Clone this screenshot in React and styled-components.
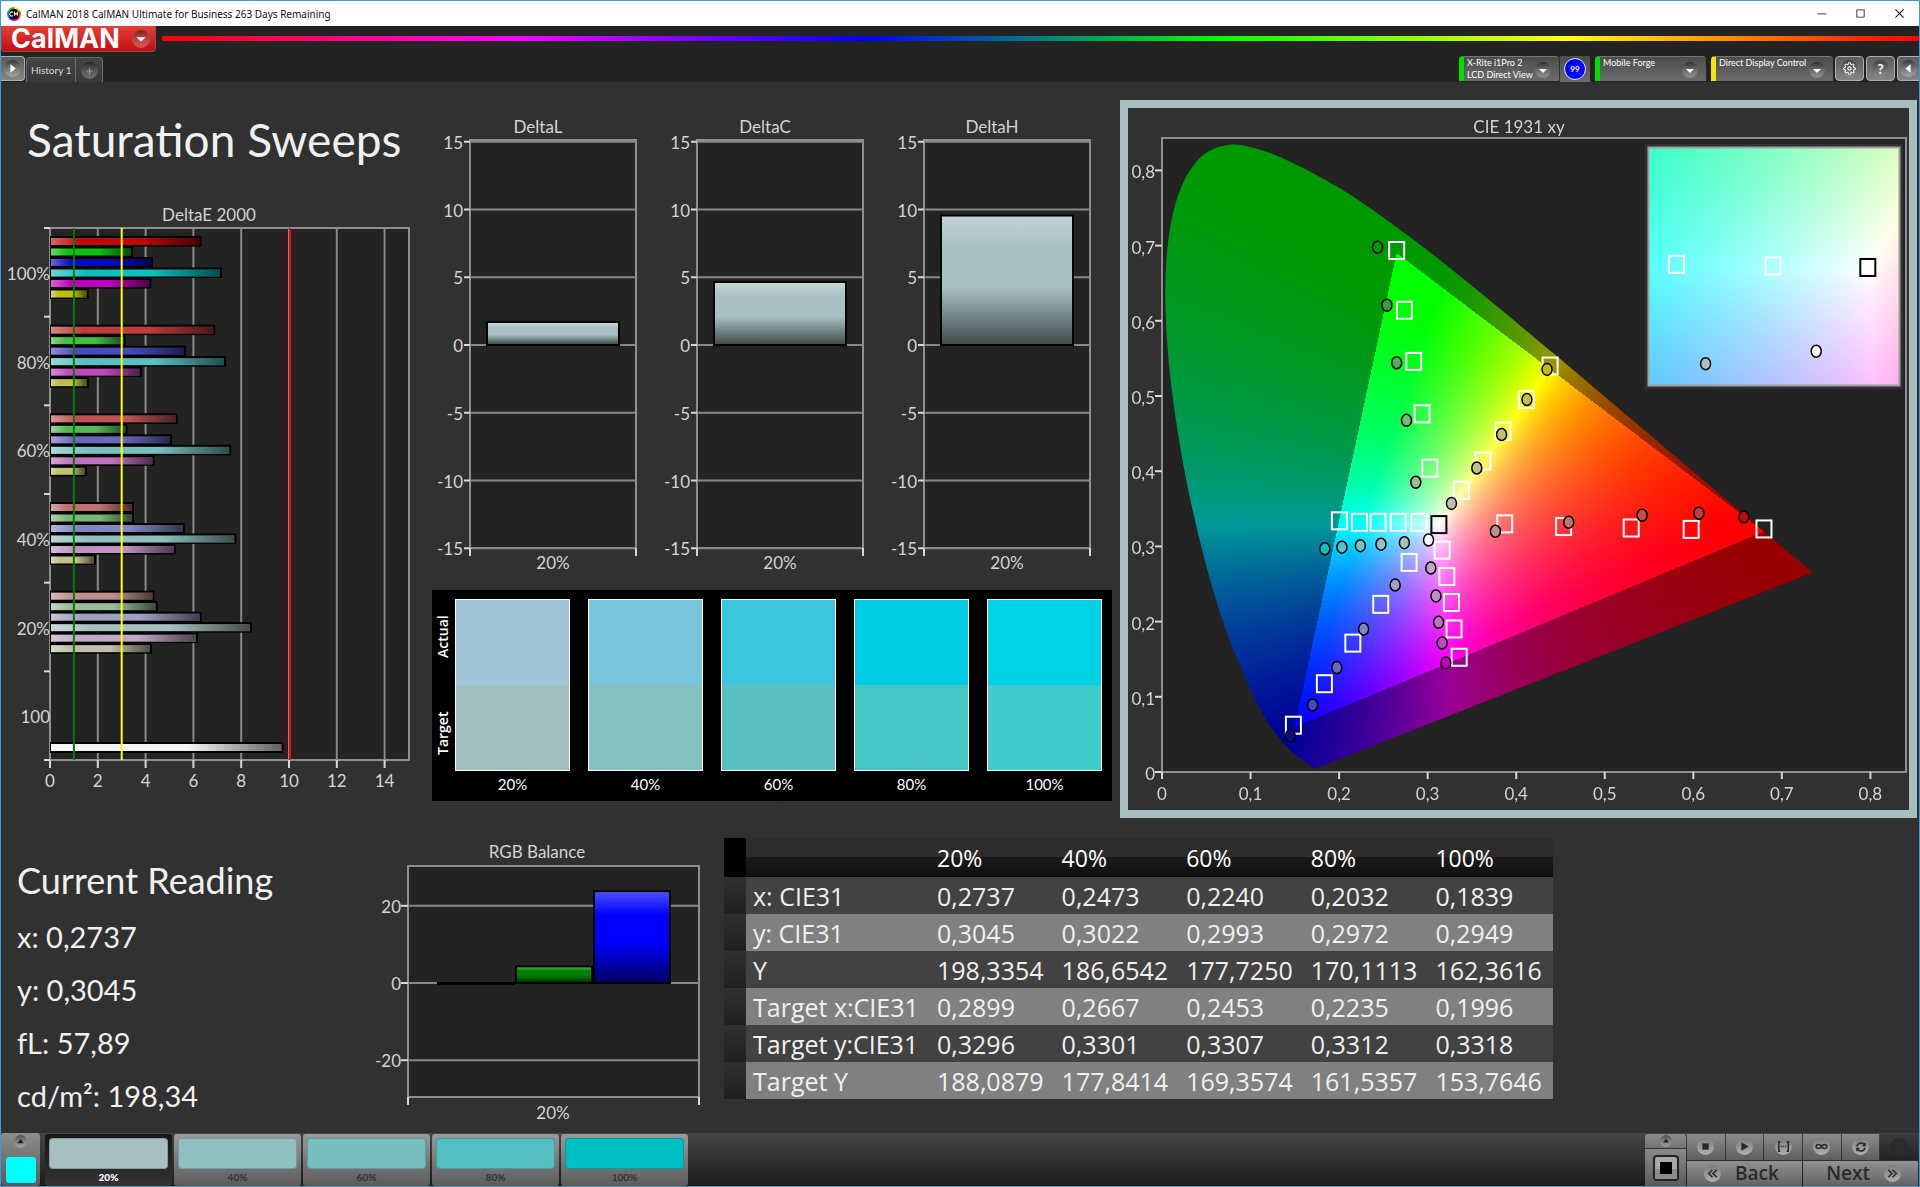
import React, { useEffect, useRef } from "react";
import styled, { createGlobalStyle } from "styled-components";
import { VscChromeMinimize, VscChromeMaximize, VscChromeClose } from "react-icons/vsc";
import { FiSettings } from "react-icons/fi";
import { FaSyncAlt } from "react-icons/fa";

const LEVELS = ["20%", "40%", "60%", "80%", "100%"];

const deltaE = [
  {
    label: "100%",
    bars: [
      ["#c00808", 6.3],
      ["#10c010", 3.43],
      ["#0a0ac0", 4.27],
      ["#0cc0c0", 7.15],
      ["#c000c0", 4.2],
      ["#c0c008", 1.58],
    ],
  },
  {
    label: "80%",
    bars: [
      ["#c03c3c", 6.87],
      ["#40c040", 3.12],
      ["#4848c0", 5.65],
      ["#58c0c0", 7.32],
      ["#c048c0", 3.8],
      ["#c0c048", 1.58],
    ],
  },
  {
    label: "60%",
    bars: [
      ["#c05454", 5.3],
      ["#58b858", 3.2],
      ["#6868c0", 5.06],
      ["#78c0c0", 7.54],
      ["#c070c0", 4.33],
      ["#c0c070", 1.5],
    ],
  },
  {
    label: "40%",
    bars: [
      ["#c07070", 3.47],
      ["#78b878", 3.47],
      ["#8484c4", 5.6],
      ["#90c0c0", 7.75],
      ["#c090c4", 5.23],
      ["#c0c088", 1.88],
    ],
  },
  {
    label: "20%",
    bars: [
      ["#c09090", 4.33],
      ["#98bc98", 4.46],
      ["#a0a0c4", 6.3],
      ["#a8c0c0", 8.4],
      ["#c0a8c4", 6.15],
      ["#c0c0a8", 4.22],
    ],
  },
];

const swatches = [
  { actual: "#a2c4d8", target: "#a2bfc0" },
  { actual: "#78c4da", target: "#84c0c0" },
  { actual: "#3cc6de", target: "#5cc0c2" },
  { actual: "#00cce4", target: "#48c6c6" },
  { actual: "#00d2e6", target: "#40cccb" },
];

const patterns = ["#a8bfc0", "#90bfc0", "#78bfc0", "#54bfc0", "#00bfc2"];

const tableRows = [
  ["x: CIE31", "0,2737", "0,2473", "0,2240", "0,2032", "0,1839"],
  ["y: CIE31", "0,3045", "0,3022", "0,2993", "0,2972", "0,2949"],
  ["Y", "198,3354", "186,6542", "177,7250", "170,1113", "162,3616"],
  ["Target x:CIE31", "0,2899", "0,2667", "0,2453", "0,2235", "0,1996"],
  ["Target y:CIE31", "0,3296", "0,3301", "0,3307", "0,3312", "0,3318"],
  ["Target Y", "188,0879", "177,8414", "169,3574", "161,5357", "153,7646"],
];

const locus = [
  [0.1741, 0.005], [0.1714, 0.0051], [0.1644, 0.0109], [0.1566, 0.0177],
  [0.144, 0.0297], [0.1241, 0.0578], [0.1096, 0.0868], [0.0913, 0.1327],
  [0.0687, 0.2007], [0.0454, 0.295], [0.0235, 0.4127], [0.0082, 0.5384],
  [0.0039, 0.6548], [0.0139, 0.7502], [0.0389, 0.812], [0.0743, 0.8338],
  [0.1142, 0.8262], [0.1547, 0.8059], [0.1929, 0.7816], [0.2296, 0.7543],
  [0.3016, 0.6923], [0.3731, 0.6245], [0.4441, 0.5547], [0.5125, 0.4866],
  [0.5752, 0.4242], [0.627, 0.3725], [0.6658, 0.334], [0.6915, 0.3083],
  [0.719, 0.2809], [0.7347, 0.2653],
];

const gamut = [[0.68, 0.32], [0.265, 0.69], [0.15, 0.06]];

const targets = [
  [0.265, 0.6935], [0.2738, 0.614], [0.2843, 0.546], [0.2937, 0.4763], [0.3024, 0.404],
  [0.4383, 0.5398], [0.4115, 0.4952], [0.3852, 0.4532], [0.3625, 0.4136], [0.338, 0.3747],
  [0.387, 0.33], [0.4535, 0.3264], [0.5299, 0.3245], [0.5976, 0.3226], [0.6798, 0.3232],
  [0.2901, 0.332], [0.2667, 0.332], [0.244, 0.332], [0.2231, 0.332], [0.2003, 0.334],
  [0.3164, 0.295], [0.3216, 0.2599], [0.3269, 0.2254], [0.3298, 0.1902], [0.3356, 0.1526],
  [0.2791, 0.2787], [0.247, 0.2229], [0.2155, 0.1714], [0.1834, 0.1174], [0.1484, 0.0622],
];

const actuals = [
  [0.2435, 0.6979, "#009c00"], [0.254, 0.6207, "#30a040"], [0.265, 0.5442, "#50b058"],
  [0.2761, 0.4676, "#78b878"], [0.2866, 0.3854, "#98bc98"],
  [0.4348, 0.5354, "#c0c008"], [0.4121, 0.4952, "#c0c048"], [0.3835, 0.4488, "#c0c070"],
  [0.3555, 0.4042, "#c0c088"], [0.3269, 0.3572, "#c0c0a8"],
  [0.6571, 0.339, "#c00808"], [0.6063, 0.344, "#c03c3c"], [0.5422, 0.3415, "#c05454"],
  [0.4593, 0.3321, "#c07070"], [0.3765, 0.3202, "#c09090"],
  [0.1839, 0.297, "#0cc0c0"], [0.2032, 0.299, "#58c0c0"], [0.224, 0.301, "#78c0c0"],
  [0.2473, 0.303, "#90c0c0"], [0.2737, 0.305, "#a8c0c0"],
  [0.3036, 0.2712, "#c0a8c4"], [0.3094, 0.2342, "#c090c4"], [0.3123, 0.199, "#c070c0"],
  [0.3164, 0.1714, "#c048c0"], [0.3205, 0.1451, "#c000c0"],
  [0.2633, 0.2486, "#a0a0c4"], [0.2277, 0.1902, "#8484c4"], [0.1974, 0.1388, "#6868c0"],
  [0.17, 0.0892, "#4848c0"], [0.1449, 0.0478, "#0a0a90"],
  [0.301, 0.3085, "#ffffff"],
];

/* ---------- charts ---------- */

function DeltaEChart() {
  const left = 49;
  const right = 408;
  const top = 28;
  const bottom = 560;
  const x = (v) => left + v * 23.9;
  const slot = (bottom - top) / 6;
  const row = (group, i) => top + group * slot + 8 + i * 10.5;

  return (
    <Chart viewBox="0 0 430 600" role="img" aria-label="DeltaE 2000">
      <defs>
        <linearGradient id="barShade">
          <stop offset="0" stopColor="#fff" stopOpacity="0.38" />
          <stop offset="0.2" stopColor="#fff" stopOpacity="0" />
          <stop offset="0.6" stopColor="#000" stopOpacity="0" />
          <stop offset="1" stopColor="#000" stopOpacity="0.6" />
        </linearGradient>
      </defs>
      <ChartText x={208} y={21} textAnchor="middle">DeltaE 2000</ChartText>
      <Plot x={left} y={top} width={right - left} height={bottom - top} />
      {[2, 4, 6, 8, 10, 12, 14].map((v) => (
        <GridLine key={v} x1={x(v)} x2={x(v)} y1={top} y2={bottom} />
      ))}
      {[0, 2, 4, 6, 8, 10, 12, 14].map((v) => (
        <g key={v}>
          <Tick x1={x(v)} x2={x(v)} y1={bottom} y2={bottom + 8} />
          <ChartText x={x(v)} y={bottom + 27} textAnchor="middle">{v}</ChartText>
        </g>
      ))}
      {[0, 1, 2, 3, 4, 5, 6].map((i) => (
        <Tick key={i} x1={left - 6} x2={left} y1={top + i * slot} y2={top + i * slot} />
      ))}
      {deltaE.map((group, g) => (
        <g key={group.label}>
          <ChartText x={left} y={top + g * slot + 52} textAnchor="end">{group.label}</ChartText>
          {group.bars.map(([color, value], i) => (
            <g key={color}>
              <rect x={left} y={row(g, i)} width={x(value) - left + 1} height={10.5} fill="#000" />
              <rect x={left + 1} y={row(g, i) + 2} width={x(value) - left - 2} height={7} fill={color} />
              <rect x={left + 1} y={row(g, i) + 2} width={x(value) - left - 2} height={7} fill="url(#barShade)" />
            </g>
          ))}
        </g>
      ))}
      <ChartText x={left} y={top + 5 * slot + 52} textAnchor="end">100</ChartText>
      <rect x={left} y={542} width={x(9.72) - left + 1} height={11} fill="#000" />
      <rect x={left + 1} y={544} width={x(9.72) - left - 2} height={7} fill="#f4f4f4" />
      <rect x={left + 1} y={544} width={x(9.72) - left - 2} height={7} fill="url(#barShade)" />
      <line x1={x(1)} x2={x(1)} y1={top} y2={bottom} stroke="#0a780a" strokeWidth="2" />
      <line x1={x(3)} x2={x(3)} y1={top} y2={bottom} stroke="#ffff00" strokeWidth="2" />
      <line x1={x(10) + 1} x2={x(10) + 1} y1={top} y2={bottom} stroke="#ff0000" strokeWidth="2" />
    </Chart>
  );
}

function DeltaChart({ title, value }) {
  const left = 39;
  const right = 205;
  const top = 30;
  const bottom = 438;
  const y = (v) => 235 - v * 13.55;
  const height = y(0) - y(value);

  return (
    <Chart viewBox="0 0 227 472" role="img" aria-label={title}>
      <defs>
        <linearGradient id="columnShade" x2="0" y2="1">
          <stop offset="0" stopColor="#fff" stopOpacity="0.3" />
          <stop offset="0.25" stopColor="#fff" stopOpacity="0" />
          <stop offset="0.55" stopColor="#000" stopOpacity="0" />
          <stop offset="1" stopColor="#000" stopOpacity="0.6" />
        </linearGradient>
      </defs>
      <ChartText x={107} y={23} textAnchor="middle">{title}</ChartText>
      <Plot x={left} y={top} width={right - left} height={bottom - top} />
      {[15, 10, 5, 0, -5, -10, -15].map((v) => (
        <g key={v}>
          <GridLine x1={left} x2={right} y1={y(v)} y2={y(v)} />
          <Tick x1={left - 6} x2={left} y1={y(v)} y2={y(v)} />
          <ChartText x={left - 7} y={y(v) + 7} textAnchor="end">{v}</ChartText>
        </g>
      ))}
      <Tick x1={left} x2={left} y1={bottom} y2={bottom + 8} />
      <Tick x1={right} x2={right} y1={bottom} y2={bottom + 8} />
      <rect x={56} y={y(value)} width={132} height={height} fill="#a8c0c2" stroke="#000" strokeWidth="2" />
      <rect x={57} y={y(value) + 1} width={130} height={height - 2} fill="url(#columnShade)" />
      <ChartText x={122} y={459} textAnchor="middle">20%</ChartText>
    </Chart>
  );
}

function RgbBalance() {
  const left = 37;
  const right = 328;
  const top = 28;
  const bottom = 259;
  const y = (v) => 145 - v * 3.86;

  return (
    <Chart viewBox="0 0 352 290" role="img" aria-label="RGB Balance">
      <ChartText x={166} y={20} textAnchor="middle">RGB Balance</ChartText>
      <Plot x={left} y={top} width={right - left} height={bottom - top} />
      {[20, 0, -20].map((v) => (
        <g key={v}>
          <GridLine x1={left} x2={right} y1={y(v)} y2={y(v)} />
          <Tick x1={left - 7} x2={left} y1={y(v)} y2={y(v)} />
          <ChartText x={left - 7} y={y(v) + 7} textAnchor="end">{v}</ChartText>
        </g>
      ))}
      <Tick x1={left} x2={left} y1={bottom} y2={bottom + 8} />
      <Tick x1={right} x2={right} y1={bottom} y2={bottom + 8} />
      <rect x={66} y={144} width={78} height={3} fill="#000" />
      {[
        [145, 4.3, "#008000"],
        [223, 23.8, "#0000ff"],
      ].map(([x, value, color]) => (
        <g key={color}>
          <rect x={x} y={y(value)} width={76} height={y(0) - y(value)} fill={color} stroke="#000" strokeWidth="2" />
          <rect x={x + 1} y={y(value) + 1} width={74} height={y(0) - y(value) - 2} fill="url(#columnShade)" />
        </g>
      ))}
      <ChartText x={182} y={281} textAnchor="middle">20%</ChartText>
    </Chart>
  );
}

/* CIE diagram: the colours are computed per pixel, axes and markers go on top */

const CIE_W = 781;
const CIE_H = 702;
const cieX = (x) => 34 + x * 885.5;
const cieY = (y) => 664 - y * 752;
const insetX = (x) => 521 + (x - 0.2601) * 4160;
const insetY = (y) => 40 + (0.3594 - y) * 3930;

function colorAt(x, y) {
  const X = x / y;
  const Z = (1 - x - y) / y;
  const rgb = [
    3.2406 * X - 1.5372 - 0.4986 * Z,
    -0.9689 * X + 1.8758 + 0.0415 * Z,
    0.0557 * X - 0.204 + 1.057 * Z,
  ].map((c) => Math.max(0, c));
  const max = Math.max(...rgb);
  return rgb.map((c) => (255 * c) / max);
}

function insideGamut(x, y) {
  return gamut.every(([ax, ay], i) => {
    const [bx, by] = gamut[(i + 1) % 3];
    return (bx - ax) * (y - ay) - (by - ay) * (x - ax) >= 0;
  });
}

function traceLocus(ctx) {
  const pts = locus.map(([x, y]) => [cieX(x), cieY(y)]);
  ctx.beginPath();
  ctx.moveTo(...pts[0]);
  for (let i = 0; i < pts.length - 1; i++) {
    const p0 = pts[Math.max(0, i - 1)];
    const p1 = pts[i];
    const p2 = pts[i + 1];
    const p3 = pts[Math.min(pts.length - 1, i + 2)];
    ctx.bezierCurveTo(
      p1[0] + (p2[0] - p0[0]) / 6,
      p1[1] + (p2[1] - p0[1]) / 6,
      p2[0] - (p3[0] - p1[0]) / 6,
      p2[1] - (p3[1] - p1[1]) / 6,
      p2[0],
      p2[1]
    );
  }
  ctx.closePath();
}

function drawChromaticity(canvas) {
  const ctx = canvas.getContext("2d");
  const image = ctx.createImageData(CIE_W, CIE_H);
  for (let py = 0; py < CIE_H; py++) {
    for (let px = 0; px < CIE_W; px++) {
      const x = (px + 0.5 - 34) / 885.5;
      const y = (664 - py - 0.5) / 752;
      if (x < 0 || y <= 0 || x + y > 1.05) continue;
      const k = insideGamut(x, y) ? 1 : 0.6;
      const [r, g, b] = colorAt(x, y);
      image.data.set([r * k, g * k, b * k, 255], (py * CIE_W + px) * 4);
    }
  }
  ctx.putImageData(image, 0, 0);
  ctx.globalCompositeOperation = "destination-in";
  traceLocus(ctx);
  ctx.fill();
  ctx.globalCompositeOperation = "source-over";

  ctx.fillStyle = "#313131";
  ctx.fillRect(517, 36, 258, 245);
  const inset = ctx.createImageData(250, 237);
  for (let py = 0; py < 237; py++) {
    for (let px = 0; px < 250; px++) {
      const rgb = colorAt(0.2601 + px / 4160, 0.3594 - py / 3930);
      inset.data.set([...rgb, 255], (py * 250 + px) * 4);
    }
  }
  ctx.putImageData(inset, 521, 40);
}

function CieChart() {
  const canvasRef = useRef(null);

  useEffect(() => drawChromaticity(canvasRef.current), []);

  return (
    <CieStack>
      <svg viewBox={`0 0 ${CIE_W} ${CIE_H}`} aria-hidden="true">
        <Plot x={34} y={30} width={744} height={634} />
      </svg>
      <canvas ref={canvasRef} width={CIE_W} height={CIE_H} />
      <svg viewBox={`0 0 ${CIE_W} ${CIE_H}`} role="img" aria-label="CIE 1931 xy">
        <ChartText x={391} y={25} textAnchor="middle">CIE 1931 xy</ChartText>
        {[0, 1, 2, 3, 4, 5, 6, 7, 8].map((v) => {
          const label = v === 0 ? "0" : `0,${v}`;
          return (
            <g key={v}>
              <Tick x1={cieX(v / 10)} x2={cieX(v / 10)} y1={664} y2={671} />
              <ChartText x={cieX(v / 10)} y={692} textAnchor="middle">{label}</ChartText>
              <Tick x1={27} x2={34} y1={cieY(v / 10)} y2={cieY(v / 10)} />
              <ChartText x={27} y={cieY(v / 10) + 8} textAnchor="end">{label}</ChartText>
            </g>
          );
        })}
        {targets.map(([x, y], i) => (
          <Target key={i} x={cieX(x) - 7.5} y={cieY(y) - 8.5} width={15} height={17} />
        ))}
        <Target $white x={cieX(0.3127) - 7.5} y={cieY(0.329) - 8.5} width={15} height={17} />
        {actuals.map(([x, y, color], i) => (
          <Actual key={i} cx={cieX(x)} cy={cieY(y)} rx={5} ry={6} fill={color} />
        ))}
        <rect x={520.5} y={39.5} width={251} height={238} fill="none" stroke="#a0a0a0" strokeWidth="2" />
        <Target x={insetX(0.2667) - 7.5} y={insetY(0.3298) - 8.5} width={15} height={17} />
        <Target x={insetX(0.2899) - 7.5} y={insetY(0.3294) - 8.5} width={15} height={17} />
        <Target $white x={insetX(0.3127) - 7.5} y={insetY(0.329) - 8.5} width={15} height={17} />
        <Actual cx={insetX(0.2737)} cy={insetY(0.3045)} rx={5} ry={6} fill="#a8c0c0" />
        <Actual cx={insetX(0.3003)} cy={insetY(0.3077)} rx={5} ry={6} fill="#ffffff" />
      </svg>
    </CieStack>
  );
}

/* ---------- small drawings ---------- */

const RoundIcon = ({ size = 16, children }) => (
  <svg width={size} height={size} viewBox="0 0 16 16" aria-hidden="true">
    <defs>
      <linearGradient id="dimple" x2="0" y2="1">
        <stop offset="0" stopColor="#000" stopOpacity="0.45" />
        <stop offset="1" stopColor="#fff" stopOpacity="0.25" />
      </linearGradient>
    </defs>
    <circle cx="8" cy="8" r="8" fill="url(#dimple)" />
    {children}
  </svg>
);

const LightIcon = ({ children }) => (
  <svg width="17" height="17" viewBox="0 0 16 16" aria-hidden="true">
    <defs>
      <linearGradient id="lightDimple" x2="0" y2="1">
        <stop offset="0" stopColor="#7c7c7c" />
        <stop offset="1" stopColor="#b0b0b0" />
      </linearGradient>
    </defs>
    <circle cx="8" cy="8" r="8" fill="url(#lightDimple)" />
    {children}
  </svg>
);

const AppIcon = () => (
  <svg width="14" height="14" viewBox="0 0 14 14" aria-hidden="true">
    <path d="M7 7 7 0A7 7 0 0 1 13 3.5z" fill="#ffe600" />
    <path d="M7 7 13 3.5A7 7 0 0 1 13 10.5z" fill="#ff5a00" />
    <path d="M7 7 13 10.5A7 7 0 0 1 7 14z" fill="#f0009a" />
    <path d="M7 7 7 14A7 7 0 0 1 1 10.5z" fill="#6a28ff" />
    <path d="M7 7 1 10.5A7 7 0 0 1 1 3.5z" fill="#00a0ff" />
    <path d="M7 7 1 3.5A7 7 0 0 1 7 0z" fill="#20d020" />
    <circle cx="7" cy="7" r="5.3" fill="#000" />
    <path d="M6 5.4A2 2 0 1 0 6 8.6M7.4 8.8V5.4L9 7.6 10.6 5.4V8.8" stroke="#fff" strokeWidth="1.1" fill="none" />
  </svg>
);

/* ---------- page ---------- */

export default function App() {
  return (
    <Window>
      <GlobalStyle />
      <TitleBar>
        <AppIcon />
        <TitleText>CalMAN 2018 CalMAN Ultimate for Business 263 Days Remaining</TitleText>
        <WindowButton aria-label="Minimize"><VscChromeMinimize /></WindowButton>
        <WindowButton aria-label="Maximize"><VscChromeMaximize /></WindowButton>
        <WindowButton aria-label="Close"><VscChromeClose /></WindowButton>
      </TitleBar>

      <Header>
        <Brand>
          <LogoButton>
            CalMAN
            <RoundIcon size={18}><path d="M4 6.5h8L8 10.5z" fill="#fff" /></RoundIcon>
          </LogoButton>
          <Spectrum />
        </Brand>
        <TabBar>
          <SquareButton $edge="left" aria-label="Show workflow">
            <RoundIcon size={17}><path d="M6 4v8L11 8z" fill="#fff" /></RoundIcon>
          </SquareButton>
          <Tabs>
            <Tab>History 1</Tab>
            <Tab aria-label="Add history">
              <RoundIcon size={17}><path d="M8 5.5v6M5 8.5h6" stroke="#999" /></RoundIcon>
            </Tab>
          </Tabs>
          <Devices>
            <DeviceGroup>
              <Device $status="#00e000" $width={100}>
                <span>X-Rite i1Pro 2<br />LCD Direct View</span>
                <RoundIcon><path d="M4 7h8L8 11z" fill="#fff" /></RoundIcon>
              </Device>
              <MeterBadge><span>99</span></MeterBadge>
            </DeviceGroup>
            <Device $status="#00e000" $width={111}>
              <span>Mobile Forge</span>
              <RoundIcon><path d="M4 7h8L8 11z" fill="#fff" /></RoundIcon>
            </Device>
            <Device $status="#f0e800" $width={122}>
              <span>Direct Display Control</span>
              <RoundIcon><path d="M4 7h8L8 11z" fill="#fff" /></RoundIcon>
            </Device>
            <ToolButtons>
              <SquareButton aria-label="Settings"><Dimple><FiSettings size={13} /></Dimple></SquareButton>
              <SquareButton aria-label="Help"><Dimple>?</Dimple></SquareButton>
              <SquareButton $edge="right" aria-label="Collapse">
                <RoundIcon size={17}><path d="M10 4v8L5 8z" fill="#fff" /></RoundIcon>
              </SquareButton>
            </ToolButtons>
          </Devices>
        </TabBar>
      </Header>

      <Main>
        <TopRow>
          <section>
            <PageTitle>Saturation Sweeps</PageTitle>
            <DeltaEChart />
          </section>
          <Middle>
            <DeltaRow>
              <DeltaChart title="DeltaL" value={1.7} />
              <DeltaChart title="DeltaC" value={4.65} />
              <DeltaChart title="DeltaH" value={9.55} />
            </DeltaRow>
            <SwatchPanel>
              <SwatchSides>
                <span>Actual</span>
                <span>Target</span>
              </SwatchSides>
              {swatches.map(({ actual, target }, i) => (
                <Swatch key={LEVELS[i]}>
                  <SwatchColors>
                    <Fill $color={actual} />
                    <Fill $color={target} />
                  </SwatchColors>
                  <figcaption>{LEVELS[i]}</figcaption>
                </Swatch>
              ))}
            </SwatchPanel>
          </Middle>
          <CiePanel>
            <CieChart />
          </CiePanel>
        </TopRow>

        <BottomRow>
          <Reading>
            <h2>Current Reading</h2>
            <p>x: 0,2737</p>
            <p>y: 0,3045</p>
            <p>fL: 57,89</p>
            <p>cd/m²: 198,34</p>
          </Reading>
          <RgbBalance />
          <DataTable>
            <thead>
              <tr>
                <Stub />
                <th />
                {LEVELS.map((level) => (
                  <th key={level} scope="col">{level}</th>
                ))}
              </tr>
            </thead>
            <tbody>
              {tableRows.map(([name, ...values]) => (
                <tr key={name}>
                  <Stub />
                  <th scope="row">{name}</th>
                  {values.map((value, i) => (
                    <td key={i}>{value}</td>
                  ))}
                </tr>
              ))}
            </tbody>
          </DataTable>
        </BottomRow>
      </Main>

      <Footer>
        <ColorPicker aria-label="Pattern color">
          <RoundIcon size={13}><path d="M4 10h8L8 5z" fill="#222" /></RoundIcon>
          <i />
        </ColorPicker>
        <PatternList>
          {patterns.map((color, i) => (
            <Pattern key={color} $color={color} $active={i === 0}>
              <i />
              {LEVELS[i]}
            </Pattern>
          ))}
        </PatternList>
        <StopPanel>
          <StopToggle aria-label="Expand">
            <RoundIcon size={12}><path d="M4 10h8L8 5z" fill="#222" /></RoundIcon>
          </StopToggle>
          <StopButton aria-label="Stop">
            <svg width="26" height="26" viewBox="0 0 26 26" aria-hidden="true">
              <rect x="1" y="1" width="24" height="24" rx="3" fill="#a8a8a8" stroke="#222" strokeWidth="2" />
              <path d="M2 14h22v10H2z" fill="#8c8c8c" />
              <rect x="7" y="7" width="12" height="12" fill="#000" />
            </svg>
          </StopButton>
        </StopPanel>
        <Transport>
          <TransportRow>
            <MediaButton aria-label="Stop reading">
              <LightIcon><rect x="5" y="5" width="6" height="6" fill="#2a2a2a" /></LightIcon>
            </MediaButton>
            <MediaButton aria-label="Read">
              <LightIcon><path d="M5 4v8L12 8z" fill="#2a2a2a" /></LightIcon>
            </MediaButton>
            <MediaButton aria-label="Read series">
              <LightIcon>
                <path d="M5 3.5H3.5v9H5M11 3.5h1.5v9H11" fill="none" stroke="#2a2a2a" strokeWidth="1.5" />
                <path d="M5.5 8h1M7.5 8h1M9.5 8h1" stroke="#2a2a2a" strokeWidth="1.5" />
              </LightIcon>
            </MediaButton>
            <MediaButton aria-label="Read continuous">
              <LightIcon>
                <path d="M8 8C6.5 5.5 3 5.5 3 8S6.5 10.5 8 8S13 5.5 13 8S9.5 10.5 8 8z" fill="none" stroke="#2a2a2a" strokeWidth="1.5" />
              </LightIcon>
            </MediaButton>
            <MediaButton aria-label="Repeat">
              <LightDimple><FaSyncAlt size={10} /></LightDimple>
            </MediaButton>
            <MediaButton $off aria-label="Off" disabled>
              <svg width="18" height="18" viewBox="0 0 18 18" aria-hidden="true">
                <circle cx="9" cy="9" r="9" fill="#2b2b2b" />
              </svg>
            </MediaButton>
          </TransportRow>
          <TransportRow>
            <NavButton>
              <LightIcon><path d="M8 4.5 4.5 8 8 11.5M12 4.5 8.5 8 12 11.5" fill="none" stroke="#2a2a2a" strokeWidth="1.5" /></LightIcon>
              Back
            </NavButton>
            <NavButton $end>
              Next
              <LightIcon><path d="M4 4.5 7.5 8 4 11.5M8 4.5 11.5 8 8 11.5" fill="none" stroke="#2a2a2a" strokeWidth="1.5" /></LightIcon>
            </NavButton>
          </TransportRow>
        </Transport>
      </Footer>
    </Window>
  );
}

const GlobalStyle = createGlobalStyle`
  * {
    box-sizing: border-box;
  }
  body {
    margin: 0;
    background: #313131;
    font-family: Lato, "Open Sans", sans-serif;
  }
  button {
    font-family: inherit;
    border: 0;
    padding: 0;
    margin: 0;
    cursor: pointer;
  }
  h1, h2, p, figure {
    margin: 0;
    font-weight: 400;
  }
  svg, canvas {
    display: block;
    flex-shrink: 0;
  }
`;

const Window = styled.div`
  display: flex;
  flex-direction: column;
  min-height: 100vh;
  border: 1px solid #3c9ad8;
  background: #313131;
`;

const TitleBar = styled.div`
  display: flex;
  align-items: center;
  height: 25px;
  padding-left: 6px;
  background: #fff;
`;

const TitleText = styled.span`
  flex: 1;
  padding-left: 5px;
  font-family: "Noto Sans", sans-serif;
  font-size: 10px;
  color: #111;
`;

const WindowButton = styled.button`
  display: grid;
  place-items: center;
  width: 39px;
  height: 25px;
  background: none;
  color: #111;
  font-size: 13px;
`;

const Header = styled.header`
  background: #232323;
`;

const Brand = styled.div`
  display: flex;
  align-items: center;
  height: 26px;
  gap: 6px;
`;

const LogoButton = styled.button`
  display: flex;
  align-items: center;
  justify-content: space-between;
  width: 155px;
  height: 26px;
  padding: 0 5px 0 9px;
  border: 1px solid #8a5050;
  border-top: 0;
  border-radius: 0 0 4px 4px;
  background: linear-gradient(#e84038, #c40c10);
  color: #fff;
  font-family: Inter, sans-serif;
  font-size: 27px;
  font-weight: 700;
  line-height: 24px;
`;

const Spectrum = styled.div`
  flex: 1;
  height: 5px;
  margin-bottom: 2px;
  background: linear-gradient(90deg, #f00, #f0f, #00f, #0f0, #ff0, #f00);
`;

const TabBar = styled.div`
  display: flex;
  align-items: flex-end;
  height: 30px;
`;

const edgeWidth = { left: 24, right: 22 };
const edgeRadius = { left: "0 4px 4px 0", right: "4px 0 0 4px" };

const SquareButton = styled.button`
  display: grid;
  place-items: center;
  width: ${({ $edge }) => edgeWidth[$edge] || 29}px;
  height: 25px;
  margin-bottom: 1px;
  border: 1px solid #b0b0b0;
  border-left-width: ${({ $edge }) => ($edge === "left" ? 0 : 1)}px;
  border-right-width: ${({ $edge }) => ($edge === "right" ? 0 : 1)}px;
  border-radius: ${({ $edge }) => edgeRadius[$edge] || "4px"};
  background: linear-gradient(#5c5c5c, #858585);
  color: #fff;
`;

const Dimple = styled.span`
  display: grid;
  place-items: center;
  width: 17px;
  height: 17px;
  border-radius: 50%;
  background: linear-gradient(#404040, #8c8c8c);
  color: #f0f0f0;
  font-size: 14px;
  font-weight: 900;
  line-height: 17px;
`;

const LightDimple = styled(Dimple)`
  background: linear-gradient(#7c7c7c, #b0b0b0);
  color: #2a2a2a;
`;

const Tabs = styled.div`
  display: flex;
  margin-left: 1px;
  border: 1px solid #6c6c6c;
  border-bottom: 0;
  border-radius: 4px 4px 0 0;
  background: linear-gradient(#454545, #383838);
`;

const Tab = styled.button`
  display: grid;
  place-items: center;
  height: 24px;
  min-width: 27px;
  padding: 0 4px;
  background: none;
  color: #d8d8d8;
  font-size: 10px;

  & + & {
    border-left: 1px solid #6c6c6c;
  }
`;

const Devices = styled.div`
  display: flex;
  gap: 5px;
  margin-left: auto;
`;

const DeviceGroup = styled.div`
  display: flex;
`;

const Device = styled.button`
  display: flex;
  justify-content: space-between;
  align-items: flex-end;
  width: ${({ $width }) => $width}px;
  height: 25px;
  padding: 0 8px 3px 3px;
  border-left: 5px solid ${({ $status }) => $status};
  border-top: 1px solid #777;
  border-radius: 4px 4px 0 0;
  background: linear-gradient(#4c4c4c, #6c6c6c);
  color: #fff;
  font-size: 9px;
  line-height: 12px;
  text-align: left;
  white-space: nowrap;

  > span {
    align-self: flex-start;
    flex: 1;
    width: 0;
  }
`;

const MeterBadge = styled.div`
  display: grid;
  place-items: center;
  width: 31px;
  border-left: 1px solid #333;
  background: linear-gradient(#4c4c4c, #6c6c6c);

  > span {
    display: grid;
    place-items: center;
    width: 22px;
    height: 22px;
    border: 1px solid #e8e8e8;
    border-radius: 50%;
    background: #0000ff;
    color: #fff;
    font-size: 8px;
    font-weight: 700;
  }
`;

const ToolButtons = styled.div`
  display: flex;
  gap: 2px;
  margin-left: -3px;
`;

const Main = styled.main`
  flex: 1;
`;

const TopRow = styled.div`
  display: grid;
  grid-template-columns: 430fr 688fr 800fr;
  align-items: start;
`;

const PageTitle = styled.h1`
  padding: 28px 0 30px 26px;
  color: #f0f0f0;
  font-size: 46px;
  line-height: 60px;
`;

const Chart = styled.svg`
  width: 100%;
  height: auto;
`;

const ChartText = styled.text`
  fill: #d4d4d4;
  font-family: Lato, sans-serif;
  font-size: 17px;
`;

const Plot = styled.rect`
  fill: #232323;
  stroke: #8f8f8f;
  stroke-width: 2;
`;

const GridLine = styled.line`
  stroke: #888;
  stroke-width: 2;
`;

const Tick = styled.line`
  stroke: #d8d8d8;
  stroke-width: 2;
`;

const Target = styled.rect`
  fill: none;
  stroke: ${({ $white }) => ($white ? "#000" : "#fff")};
  stroke-width: 2;
`;

const Actual = styled.ellipse`
  stroke: #000;
  stroke-width: 1.5;
`;

const Middle = styled.section`
  padding: 28px 7px 0 0;
`;

const DeltaRow = styled.div`
  display: grid;
  grid-template-columns: repeat(3, 1fr);
`;

const SwatchPanel = styled.div`
  display: flex;
  gap: 18px;
  margin: 8px 0 0 1px;
  padding: 9px 10px 9px 3px;
  background: #000;
`;

const SwatchSides = styled.div`
  display: flex;
  flex-direction: row-reverse;
  justify-content: space-between;
  align-items: flex-start;
  width: 20px;
  height: 172px;
  margin-right: -18px;
  padding: 16px 0;
  writing-mode: vertical-rl;
  transform: rotate(180deg);
  color: #fff;
  font-family: "Open Sans", sans-serif;
  font-size: 14px;
  font-weight: 600;
  line-height: 16px;
`;

const Swatch = styled.figure`
  flex: 1;

  figcaption {
    padding-top: 6px;
    color: #fff;
    font-size: 15px;
    line-height: 15px;
    text-align: center;
  }
`;

const SwatchColors = styled.div`
  display: grid;
  grid-template-rows: 1fr 1fr;
  height: 172px;
  border: 1px solid #fff;
`;

const Fill = styled.div`
  background: ${({ $color }) => $color};
`;

const CiePanel = styled.section`
  margin: 18px 2px 0 1px;
  border: 8px solid #a8bec0;
`;

const CieStack = styled.div`
  display: grid;

  > * {
    grid-area: 1 / 1;
    width: 100%;
    height: auto;
  }
`;

const BottomRow = styled.div`
  display: grid;
  grid-template-columns: 370fr 352fr 1196fr;
  align-items: start;
  padding-top: 20px;
`;

const Reading = styled.section`
  padding: 16px 0 0 16px;
  color: #f0f0f0;

  h2 {
    padding-bottom: 3px;
    font-size: 36px;
    line-height: 53px;
  }
  p {
    font-size: 29px;
    line-height: 53px;
  }
`;

const Stub = styled.td`
  width: 22px;
`;

const DataTable = styled.table`
  width: 829px;
  margin-left: 1px;
  border-collapse: collapse;
  table-layout: fixed;
  color: #f0f0f0;
  font-family: "Open Sans", sans-serif;
  font-size: 25px;
  line-height: 36px;

  th,
  td {
    padding: 0 0 0 7px;
    font-weight: 400;
    text-align: left;
    white-space: nowrap;
  }
  ${Stub} {
    padding: 0;
    background: linear-gradient(#303030, #202020);
  }
  thead th {
    height: 39px;
    color: #fff;
    font-size: 23px;
    background: linear-gradient(#2c2c2c, #2c2c2c 48%, #1a1a1a 50%, #111 96%, #000);
  }
  thead ${Stub} {
    background: #000;
  }
  thead th:nth-child(2) {
    width: 184px;
  }
  tbody tr {
    height: 37px;
    background: #424242;
  }
  tbody tr:nth-child(even) {
    background: #808080;
  }
`;

const Footer = styled.footer`
  display: flex;
  height: 53px;
  padding-right: 1px;
  background: linear-gradient(#454545, #1c1c1c);
`;

const ColorPicker = styled.button`
  display: flex;
  flex-direction: column;
  align-items: center;
  justify-content: space-between;
  width: 39px;
  padding: 2px 0 3px;
  border-radius: 3px;
  background: linear-gradient(#8c8c8c, #5a5a5a);

  i {
    width: 30px;
    height: 26px;
    border-radius: 3px;
    background: #00ffff;
  }
`;

const PatternList = styled.div`
  display: flex;
  flex: 1;
  gap: 2px;
  padding: 1px 0 0 5px;
`;

const Pattern = styled.button`
  display: flex;
  flex-direction: column;
  align-items: center;
  justify-content: space-between;
  width: 127px;
  height: 52px;
  padding: 4px 4px 3px;
  border-radius: 3px;
  background: ${({ $active }) =>
    $active ? "linear-gradient(#161616, #333)" : "linear-gradient(#999, #5c5c5c)"};
  color: ${({ $active }) => ($active ? "#fff" : "#303030")};
  font-size: 10px;
  font-weight: ${({ $active }) => ($active ? 900 : 700)};
  line-height: 12px;

  i {
    align-self: stretch;
    height: 31px;
    border: 1px solid #00000030;
    border-radius: 4px;
    background: ${({ $color }) => $color};
  }
`;

const StopPanel = styled.div`
  display: flex;
  flex-direction: column;
  width: 41px;
  margin-right: 1px;
  padding-top: 1px;
`;

const StopToggle = styled.button`
  display: grid;
  place-items: center;
  height: 15px;
  border-bottom: 1px solid #333;
  border-radius: 3px 3px 0 0;
  background: linear-gradient(#8c8c8c, #747474);
`;

const StopButton = styled.button`
  display: grid;
  place-items: center;
  flex: 1;
  background: linear-gradient(#8a8a8a, #5a5a5a);
`;

const Transport = styled.div`
  display: grid;
  grid-template-rows: 1fr 1fr;
  gap: 1px;
  width: 231px;
  padding-top: 1px;
`;

const TransportRow = styled.div`
  display: flex;
  gap: 1px;
`;

const MediaButton = styled.button`
  display: grid;
  place-items: center;
  flex: 1;
  background: ${({ $off }) =>
    $off ? "linear-gradient(#3c3c3c, #222)" : "linear-gradient(#8c8c8c, #5e5e5e)"};
`;

const NavButton = styled.button`
  display: flex;
  align-items: center;
  justify-content: ${({ $end }) => ($end ? "flex-end" : "flex-start")};
  flex: 1;
  gap: 14px;
  padding: 0 17px;
  background: linear-gradient(#929292, #626262);
  color: #2a2a2a;
  font-family: "Open Sans", sans-serif;
  font-size: 19px;
  font-weight: 600;
  line-height: 24px;
`;
